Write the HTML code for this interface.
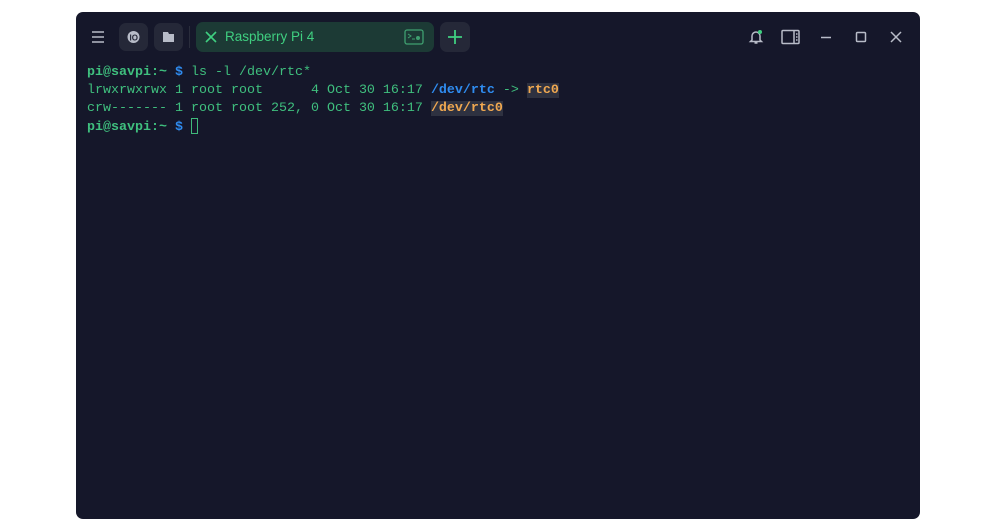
<!DOCTYPE html>
<html><head><style>
body{margin:0;width:1000px;height:532px;background:#fff;position:relative;overflow:hidden;font-family:"Liberation Sans",sans-serif}
.win{position:absolute;left:76px;top:12px;width:844px;height:507px;background:#15172a;border-radius:7px}
.btn{position:absolute;top:11px;width:29px;height:28px;border-radius:7px;background:#252838}
.tab{position:absolute;left:120px;top:10px;width:238px;height:30px;border-radius:7px;background:#1c3a35}
.term{position:absolute;left:11px;top:52px;font-family:"Liberation Mono",monospace;font-size:13.33px;line-height:18px;color:#3fbf7e;white-space:pre;font-weight:normal}
.b{font-weight:bold}
.blue{color:#2f8cf0;font-weight:bold}
.org{color:#f0a850;font-weight:bold;background:#2e3140}
.ic{position:absolute;stroke:#b8bcc8;fill:none;stroke-width:1.5}
</style></head><body>
<div class="win">
<svg class="ic" style="left:15px;top:18px" width="14" height="14"><path d="M1 2h12M1 7h12M1 12h12"/></svg>
<div class="btn" style="left:43px"><svg width="29" height="28"><circle cx="14.5" cy="14" r="6" fill="#b8bcc8"/><text x="10.5" y="17.5" font-size="8" font-family="Liberation Sans" font-weight="bold" fill="#252838">IO</text></svg></div>
<div class="btn" style="left:78px"><svg width="29" height="28"><path d="M9 9h5l1 2h5v8H9z" fill="#b8bcc8"/></svg></div>
<div style="position:absolute;left:113px;top:14px;width:1px;height:22px;background:#2a2d3c"></div>
<div class="tab">
<svg style="position:absolute;left:9px;top:9px" width="12" height="12"><path d="M1 1l10 10M11 1L1 11" stroke="#3fcf80" stroke-width="1.6"/></svg>
<span style="position:absolute;left:29px;top:7px;font-size:13.5px;color:#3fcf80">Raspberry Pi 4</span>
<svg style="position:absolute;left:208px;top:7px" width="20" height="16"><rect x="1" y="1" width="18" height="14" rx="2" stroke="#3fa070" fill="none" stroke-width="1.3"/><path d="M4 5l3 2-3 2M8 10h3" stroke="#3fa070" fill="none"/><circle cx="14" cy="9" r="2" fill="#3fa070"/></svg>
</div>
<div class="btn" style="left:364px;width:30px;top:10px;height:30px"><svg width="30" height="30"><path d="M15 8v14M8 15h14" stroke="#3fcf80" stroke-width="1.8"/></svg></div>
<svg class="ic" style="left:672px;top:17px" width="16" height="16"><path d="M4 11V7a4 4 0 0 1 8 0v4l1.5 1.5h-11z M6.5 14h3"/><circle cx="12" cy="3" r="2" fill="#3fcf80" stroke="none"/></svg>
<svg class="ic" style="left:705px;top:17px" width="20" height="16"><rect x="1" y="1.5" width="17" height="13" rx="1"/><path d="M13 1.5v13M15 5h1.5M15 8h1.5M15 11h1.5"/></svg>
<svg class="ic" style="left:744px;top:24px" width="12" height="3"><path d="M1 1.5h10"/></svg>
<svg class="ic" style="left:779px;top:19px" width="12" height="12"><rect x="1.5" y="1.5" width="9" height="9" rx="1"/></svg>
<svg class="ic" style="left:814px;top:19px" width="12" height="12"><path d="M1 1l10 10M11 1L1 11"/></svg>
<div class="term"><span class="b">pi@savpi:~</span> <span class="blue">$</span> ls -l /dev/rtc*
lrwxrwxrwx 1 root root      4 Oct 30 16:17 <span class="blue">/dev/rtc</span> -&gt; <span class="org">rtc0</span>
crw------- 1 root root 252, 0 Oct 30 16:17 <span class="org">/dev/rtc0</span>
<span class="b">pi@savpi:~</span> <span class="blue">$</span> <span style="display:inline-block;width:7px;height:16px;border:1px solid #3fb97a;vertical-align:-4px;box-sizing:border-box"></span></div>
</div>
</body></html>
